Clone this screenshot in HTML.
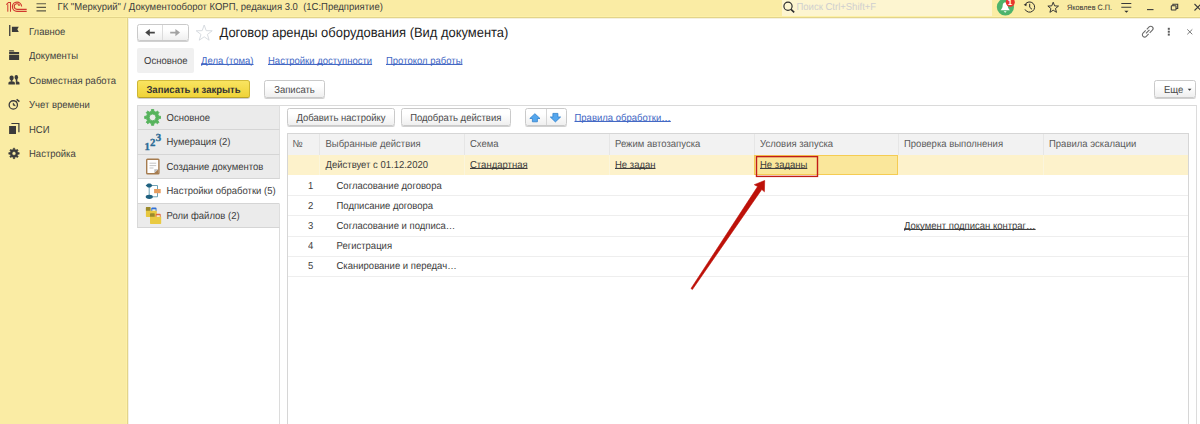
<!DOCTYPE html>
<html lang="ru">
<head>
<meta charset="utf-8">
<title>Договор аренды оборудования (Вид документа)</title>
<style>
*{box-sizing:border-box;margin:0;padding:0}
html,body{width:1200px;height:424px;overflow:hidden;background:#fff}
body{text-rendering:geometricPrecision;font-family:"Liberation Sans",sans-serif;font-size:9.5px;color:#3c3c3c;position:relative}
.abs{position:absolute}
.t{position:absolute;white-space:nowrap;line-height:12px;font-size:9.5px;transform:scaleY(1.07);transform-origin:50% 77.5%}
.bt{display:inline-block;position:relative;top:1.7px;transform:scaleY(1.07);transform-origin:50% 77.5%}
#topbar{left:0;top:0;width:1200px;height:16px;background:#faeca4}
#topline{left:0;top:16px;width:1200px;height:3px;background:linear-gradient(#fdf1a7 0,#fdf1a7 1px,#e3d48a 1px,#e3d48a 2px,#f4f1e2 2px,#f4f1e2 3px)}
#side{left:0;top:18px;width:129px;height:406px;background:linear-gradient(90deg,#faeca4 0,#faeca4 126px,#fdf1a7 126px,#fdf1a7 127px,#e3d48a 127px,#e3d48a 128px,#f4f1e2 128px,#f4f1e2 129px)}
.nav{left:29px;color:#414141}
.hd{color:#5a5a5a}
.btn{position:absolute;border:1px solid #cacaca;border-radius:2.5px;background:linear-gradient(#ffffff 30%,#efefef);box-shadow:0 1px 0.5px rgba(0,0,0,.18);font-size:9.5px;color:#4a4a4a;text-align:center;white-space:nowrap;line-height:16px;height:18px}
.lnk{color:#4166c4;text-decoration:underline;text-decoration-skip-ink:none;text-underline-offset:0.2px;text-decoration-thickness:0.7px}
.ul{text-decoration:underline;text-decoration-skip-ink:none;text-underline-offset:0.2px;text-decoration-thickness:0.7px}
.ltab{position:absolute;left:137px;width:143px;background:#ebebeb;border-left:1px solid #d9d9d9;border-bottom:1px solid #d5d5d5;border-right:1px solid #dedede}
.ltab span{position:absolute;left:28.5px;font-size:9.5px;line-height:12px;white-space:nowrap;transform:scaleY(1.07);transform-origin:50% 77.5%}
.hl{position:absolute;height:1px;background:#eeeeee;left:288px;width:900px}
.vl{position:absolute;width:1px;background:#e6e6e6;top:134px;height:21px}
.vy{position:absolute;width:1px;background:#fbf5dc;top:155px;height:19.500px}
</style>
</head>
<body>
<!-- top bar -->
<div id="topbar" class="abs"></div>
<div id="topline" class="abs"></div>
<div class="abs" style="left:781.5px;top:0;width:210.5px;height:16px;background:#fdf5d0"></div>
<div class="t" style="left:57.500px;top:2.400px">ГК "Меркурий" / Документооборот КОРП, редакция 3.0&nbsp; (1С:Предприятие)</div>
<div class="t" style="left:796.500px;top:2.400px;color:#cfcfcf">Поиск Ctrl+Shift+F</div>
<div class="t" style="left:1067px;top:1.5px;font-size:7.3px;color:#333">Яковлев С.П.</div>

<!-- sidebar -->
<div id="side" class="abs"></div>
<div class="t nav" style="top:26.600px">Главное</div>
<div class="t nav" style="top:51.100px">Документы</div>
<div class="t nav" style="top:75.600px">Совместная работа</div>
<div class="t nav" style="top:100.100px">Учет времени</div>
<div class="t nav" style="top:124.600px">НСИ</div>
<div class="t nav" style="top:149.100px">Настройка</div>

<!-- header -->
<div class="btn" style="left:137px;top:24px;width:51.500px;height:17px"></div>
<div class="abs" style="left:162px;top:25px;width:1px;height:15px;background:#dcdcdc"></div>
<div class="t" style="left:219.500px;top:24px;font-size:12.95px;line-height:18px;color:#1c1c1c;transform:scaleY(1.05)">Договор аренды оборудования (Вид документа)</div>

<div class="abs" style="left:137px;top:48px;width:57px;height:24.500px;background:#f0f0f0;border-radius:2px"></div>
<div class="t" style="left:144px;top:55.850px">Основное</div>
<div class="t lnk" style="left:201px;top:55.850px">Дела (тома)</div>
<div class="t lnk" style="left:268px;top:55.850px">Настройки доступности</div>
<div class="t lnk" style="left:386px;top:55.850px">Протокол работы</div>

<div class="btn" style="left:137px;top:80px;width:113px;background:linear-gradient(#f9e460,#efd338);border-color:#d3bc3a #cdb634 #b9a32a #cdb634;font-weight:bold;color:#333"><span class="bt">Записать и закрыть</span></div>
<div class="btn" style="left:264px;top:80px;width:61px"><span class="bt">Записать</span></div>
<div class="btn" style="left:1154px;top:80px;width:41.500px;text-align:left;padding-left:9px"><span class="bt">Еще</span></div>

<!-- panel frame + left tabs -->
<div class="abs" style="left:137px;top:105px;width:1060px;height:1px;background:#dadada"></div>
<div class="abs" style="left:279px;top:105px;width:1px;height:319px;background:#dcdcdc"></div>
<div class="abs" style="left:1196px;top:105px;width:1px;height:319px;background:#dcdcdc"></div>
<div class="ltab" style="top:106px;height:23.500px"><span style="top:6.850px">Основное</span></div>
<div class="ltab" style="top:129.500px;height:25px"><span style="top:7.800px">Нумерация (2)</span></div>
<div class="ltab" style="top:154.500px;height:24.500px"><span style="top:7.400px">Создание документов</span></div>
<div class="ltab" style="top:179px;height:24.500px;background:#fff;border-right-color:#fff"><span style="top:7.400px">Настройки обработки (5)</span></div>
<div class="ltab" style="top:203.500px;height:24.500px"><span style="top:7.800px">Роли файлов (2)</span></div>

<!-- toolbar -->
<div class="btn" style="left:287px;top:108px;width:108px"><span class="bt">Добавить настройку</span></div>
<div class="btn" style="left:401px;top:108px;width:109.500px"><span class="bt">Подобрать действия</span></div>
<div class="btn" style="left:524.500px;top:108px;width:42.500px"></div>
<div class="abs" style="left:545.500px;top:109px;width:1px;height:16px;background:#d6d6d6"></div>
<div class="t lnk" style="left:574.500px;top:112.600px">Правила обработки…</div>

<!-- table -->
<div class="abs" style="left:287px;top:133px;width:902px;height:292px;border:1px solid #d6d6d6"></div>
<div class="abs" style="left:288px;top:134px;width:900px;height:21px;background:#f2f2f2"></div>
<div class="abs" style="left:288px;top:155px;width:900px;height:19.500px;background:#fdf2cb"></div>
<div class="vl" style="left:319px"></div><div class="vl" style="left:464px"></div><div class="vl" style="left:609px"></div><div class="vl" style="left:753.500px"></div><div class="vl" style="left:898px"></div><div class="vl" style="left:1043px"></div>
<div class="vy" style="left:319px"></div><div class="vy" style="left:464px"></div><div class="vy" style="left:609px"></div><div class="vy" style="left:1043px"></div>
<div class="abs" style="left:754px;top:155px;width:144px;height:19.500px;background:#fae79b;border:1px solid #f5cc52"></div>
<div class="t hd" style="left:292.500px;top:138.600px">№</div>
<div class="t hd" style="left:325.500px;top:138.600px">Выбранные действия</div>
<div class="t hd" style="left:470px;top:138.600px">Схема</div>
<div class="t hd" style="left:615px;top:138.600px">Режим автозапуска</div>
<div class="t hd" style="left:760px;top:138.600px">Условия запуска</div>
<div class="t hd" style="left:904px;top:138.600px">Проверка выполнения</div>
<div class="t hd" style="left:1049px;top:138.600px">Правила эскалации</div>

<div class="t" style="left:325.500px;top:159.700px">Действует с 01.12.2020</div>
<div class="t ul" style="left:470px;top:159.700px">Стандартная</div>
<div class="t ul" style="left:615px;top:159.700px">Не задан</div>
<div class="t ul" style="left:760px;top:159.700px">Не заданы</div>

<div class="t" style="left:308px;top:180.800px">1</div><div class="t" style="left:336.500px;top:180.800px">Согласование договора</div>
<div class="t" style="left:308px;top:201.000px">2</div><div class="t" style="left:336.500px;top:201.000px">Подписание договора</div>
<div class="t" style="left:308px;top:221.100px">3</div><div class="t" style="left:336.500px;top:221.100px">Согласование и подписа…</div>
<div class="t ul" style="left:904px;top:221.100px">Документ подписан контраг…</div>
<div class="t" style="left:308px;top:241.300px">4</div><div class="t" style="left:336.500px;top:241.300px">Регистрация</div>
<div class="t" style="left:308px;top:261.400px">5</div><div class="t" style="left:336.500px;top:261.400px">Сканирование и передач…</div>

<div class="hl" style="top:195px"></div>
<div class="hl" style="top:215px"></div>
<div class="hl" style="top:235.500px"></div>
<div class="hl" style="top:256px"></div>
<div class="hl" style="top:276px"></div>

<!-- icons + annotation -->
<svg class="abs" style="left:0;top:0" width="1200" height="424" viewBox="0 0 1200 424">
<!--ICONS-START-->
<!-- 1C logo -->
<g fill="none" stroke="#d0382e" stroke-width="1.150">
  <path d="M6.300 4.700 L8.500 2.450 L10.500 2.450 L10.500 11.700" stroke-width="1.050"/>
  <path d="M7.800 4.300 L7.800 11.700" stroke-width="1"/>
  <path d="M21.600 6.500 A4.600 4.600 0 1 0 17 11.300 L26.700 11.300"/>
  <path d="M19.700 5.700 A2.800 2.800 0 1 0 17 9.350 L26.700 9.350"/>
  <path d="M18.300 5.700 L19.100 4.900" stroke-width="0.900"/>
</g>
<!-- hamburger -->
<g stroke="#5d5946" stroke-width="1.1"><path d="M36.500 3.800H46M36.500 7.400H46M36.500 10.900H46"/></g>
<!-- search -->
<g fill="none" stroke="#2e2e2e" stroke-width="1.2"><circle cx="788" cy="6.300" r="4.100"/><path d="M791 9.400L794.200 12.300" stroke-width="1.600"/></g>
<!-- bell -->
<circle cx="1005.400" cy="7" r="8.600" fill="#4db36b"/>
<path d="M1005.200 2.300 C1003.300 2.600 1002.700 4.300 1002.600 6.300 C1002.500 8.200 1001.400 9.200 1000.500 10.300 L1009.900 10.300 C1009 9.200 1007.900 8.200 1007.800 6.300 C1007.700 4.300 1007.100 2.600 1005.200 2.300Z" fill="#fff"/>
<path d="M1003.700 11.300 L1006.700 11.300 L1005.200 12.700Z" fill="#fff"/>
<circle cx="1010.300" cy="2.200" r="4.500" fill="#e8352d"/>
<text x="1010.100" y="4.500" font-family="Liberation Sans, sans-serif" font-weight="bold" font-size="8" fill="#fff" text-anchor="middle">1</text>
<!-- history -->
<g fill="none" stroke="#2e2e2e" stroke-width="1"><path d="M1025.300 4.200 A5.100 5.100 0 1 1 1025 9.400"/><path d="M1029.700 3.800 V7.300 L1032 9.300"/></g>
<path d="M1023.600 4.800 L1026.800 3.200 L1026.300 6.300Z" fill="#2e2e2e"/>
<!-- star -->
<path d="M1053.20 2.20 L1054.61 5.86 L1058.53 6.07 L1055.48 8.54 L1056.49 12.33 L1053.20 10.20 L1049.91 12.33 L1050.92 8.54 L1047.87 6.07 L1051.79 5.860Z" fill="none" stroke="#2e2e2e" stroke-width="0.950" stroke-linejoin="round"/>
<!-- menu -->
<g stroke="#3a3a3a" stroke-width="1.100"><path d="M1121.300 3.500H1131.300M1121.300 7.200H1131.300"/></g>
<path d="M1124.300 10.700 L1128.500 10.700 L1126.400 12.700Z" fill="#2e2e2e"/>
<!-- window controls -->
<g fill="none" stroke="#3a3a3a" stroke-width="1.100">
<path d="M1147 9.600H1153.500"/>
<rect x="1171.300" y="5.800" width="4.700" height="4.200" rx="0.500"/><path d="M1172.900 5.800V4.300H1177.700V8.500H1176"/>
<path d="M1194.500 4L1201 10.500M1194.500 10.500L1201 4"/>
</g>
<!-- sidebar icons -->
<g fill="#3b3b3b">
<rect x="9.100" y="25" width="1.300" height="11"/>
<path d="M11.900 26.700 H18.800 L17.300 29.300 L18.800 31.900 H11.900Z"/>
<path d="M9.100 50.300 H13.600 L14.400 51.600 H9.100Z"/><rect x="9.100" y="52" width="10" height="2"/><rect x="9.100" y="54.700" width="10" height="5.300"/>
<ellipse cx="16.300" cy="77.300" rx="1.800" ry="2.400"/><rect x="15.800" y="79" width="1.500" height="2.800"/><path d="M15.800 84.500 V81.500 H17.900 Q19.500 81.500 19.500 83.100 V84.500Z"/>
<ellipse cx="11.600" cy="78" rx="2.700" ry="2.900" fill="#faeca4"/>
<ellipse cx="11.600" cy="78" rx="2.150" ry="2.400"/><rect x="10.800" y="80" width="1.600" height="1.800"/><path d="M8.400 84.500 V83 Q8.400 81.500 10 81.500 H13.300 Q14.900 81.500 14.900 83 V84.500Z"/>
<rect x="9.100" y="126" width="6.900" height="8"/>
<path d="M17.92 152.62 L19.24 152.62 L19.24 154.18 L17.92 154.18 L17.33 155.62 L18.26 156.56 L17.16 157.66 L16.22 156.73 L14.78 157.32 L14.78 158.64 L13.22 158.64 L13.22 157.32 L11.78 156.73 L10.84 157.66 L9.74 156.56 L10.67 155.62 L10.08 154.18 L8.76 154.18 L8.76 152.62 L10.08 152.62 L10.67 151.18 L9.74 150.24 L10.84 149.14 L11.78 150.07 L13.22 149.48 L13.22 148.16 L14.78 148.16 L14.78 149.48 L16.22 150.07 L17.16 149.14 L18.26 150.24 L17.33 151.18Z M15.90 153.40 A1.9 1.9 0 1 0 12.10 153.40 A1.9 1.9 0 1 0 15.90 153.40Z" fill-rule="evenodd" stroke="#3b3b3b" stroke-width="0.5" stroke-linejoin="round"/>
</g>
<g fill="none" stroke="#3b3b3b">
<circle cx="13.300" cy="104.900" r="4.150" stroke-width="1.300"/>
<path d="M13.200 102.900 V105.200 L15.300 105.900Z" stroke-width="0.600" fill="#3b3b3b"/>
<path d="M16.600 99.300 L19.400 101.600" stroke-width="1.500"/><path d="M16.300 101.700 L17.500 100.600" stroke-width="1"/>
<path d="M11.400 123.500 H18.900 V132.200" stroke-width="1.200"/>
</g>
<!-- nav arrows -->
<path d="M145.200 32.600 L149.800 28.900 V31.700 H154.800 V33.500 H149.800 V36.300Z" fill="#444"/>
<path d="M180 32.600 L175.400 28.900 V31.800 H170.200 V33.400 H175.400 V36.300Z" fill="#a2a2a2"/>
<path d="M204.20 25.00 L206.20 30.65 L212.19 30.80 L207.43 34.45 L209.14 40.20 L204.20 36.80 L199.26 40.20 L200.97 34.45 L196.21 30.80 L202.20 30.650Z" fill="#fff" stroke="#d3d7dd" stroke-width="0.900" stroke-linejoin="round"/>
<!-- link / dots / close -->
<g fill="none" stroke="#6a6a6a" stroke-width="1.100" transform="rotate(-45 1147.700 31.600)">
<path d="M1148.700 29.300 H1152 A2.300 2.300 0 0 1 1152 33.900 H1148.200"/>
<path d="M1146.700 33.900 H1143.400 A2.300 2.300 0 0 1 1143.400 29.300 H1147.200"/>
<path d="M1145.200 31.600 H1150.200"/>
</g>
<g fill="#5a5a5a"><rect x="1167.800" y="27.800" width="2" height="2"/><rect x="1167.800" y="30.700" width="2" height="2"/><rect x="1167.800" y="33.600" width="2" height="2"/></g>
<path d="M1187.300 29.400 L1192.300 34.300 M1187.300 34.300 L1192.300 29.400" stroke="#6a6a6a" stroke-width="0.900" fill="none"/>
<!-- Еще caret -->
<path d="M1187.700 88.800 H1191.500 L1189.600 90.800Z" fill="#3a3a3a"/>
<!-- left tab icons -->
<path d="M158.68 116.19 L160.51 116.23 L160.51 118.57 L158.68 118.61 L157.76 120.84 L159.03 122.17 L157.37 123.83 L156.04 122.56 L153.81 123.48 L153.77 125.31 L151.43 125.31 L151.39 123.48 L149.16 122.56 L147.83 123.83 L146.17 122.17 L147.44 120.84 L146.52 118.61 L144.69 118.57 L144.69 116.23 L146.52 116.19 L147.44 113.96 L146.17 112.63 L147.83 110.97 L149.16 112.24 L151.39 111.32 L151.43 109.49 L153.77 109.49 L153.81 111.32 L156.04 112.24 L157.37 110.97 L159.03 112.63 L157.76 113.96Z M156.00 117.40 A3.4 3.4 0 1 0 149.20 117.40 A3.4 3.4 0 1 0 156.00 117.40Z" fill="#56b35c" fill-rule="evenodd" stroke="#56b35c" stroke-width="0.9" stroke-linejoin="round"/>
<g font-family="Liberation Serif, serif" font-weight="bold" font-size="10.800" fill="#2b6b96" stroke="#2b6b96" stroke-width="0.35">
<text x="144.600" y="149.700">1</text><text x="149.900" y="145.500">2</text><text x="155.700" y="141.200">3</text>
</g>
<!-- doc icon -->
<rect x="146.700" y="159.200" width="12.200" height="14.600" rx="0.800" fill="#fff" stroke="#a67c4f" stroke-width="1.400"/>
<g stroke="#bdbdbd" stroke-width="0.900"><path d="M149.500 163.200H156.200M149.500 165.600H156.200M149.500 168H153.500"/></g>
<path d="M154.300 173.100 L158.200 169.200 V173.100Z" fill="#a67c4f"/>
<path d="M154.300 169.200 H158.200 L154.300 173.100Z" fill="#bcbcbc"/>
<!-- flow icon -->
<g fill="none" stroke="#6098ad" stroke-width="0.900">
<path d="M149.200 187 V195"/><path d="M152.500 185.500 H157.500 V189"/><path d="M157.500 193 V196.800 H152.500"/>
</g>
<path d="M145.600 185.500 L148 183.450 H150.400 L152.800 185.500 L150.400 187.550 H148Z" fill="#1f6180"/>
<ellipse cx="149.300" cy="196.800" rx="3.600" ry="2.150" fill="#1f6180"/>
<rect x="154.100" y="189" width="6.600" height="4.200" fill="#e79d5f"/>
<!-- folders icon -->
<path d="M151.300 211.200 V208.600 Q151.300 207.600 152.300 207.600 H155.500 Q156.500 207.600 156.500 208.600 V211.200Z" fill="#2f6fd6"/>
<rect x="152.300" y="209.300" width="3.300" height="1.900" fill="#f6f2d8"/>
<path d="M145.900 216.300 V207.800 Q145.900 207.100 146.600 207.100 H149.900 Q150.500 207.100 150.500 207.800 V210.800 H156.800 V216.300 Q156.800 217 156.100 217 H146.600 Q145.900 217 145.900 216.300Z" fill="#e7c73f"/>
<path d="M145.900 210.800 V207.800 Q145.900 207.100 146.600 207.100 H149.900 Q150.500 207.100 150.500 207.800 V210.800Z" fill="#9a892b"/>
<path d="M155.700 217 V214.700 Q155.700 213.800 156.600 213.800 H159.800 Q160.700 213.800 160.700 214.700 V217Z" fill="#e0693c"/>
<rect x="156.600" y="215.300" width="3.200" height="1.700" fill="#fbf3e6"/>
<path d="M150 223.300 V214 Q150 213.300 150.700 213.300 H154.100 Q154.700 213.300 154.700 214 V216.700 H161.200 V223.300 Q161.200 224 160.500 224 H150.700 Q150 224 150 223.300Z" fill="#e9ca42"/>
<path d="M150 216.700 V214 Q150 213.300 150.700 213.300 H154.100 Q154.700 213.300 154.700 214 V216.700Z" fill="#9a892b"/>
<!-- toolbar arrows -->
<path d="M534.900 113.700 L540 118.500 H537.400 V121.800 H532.400 V118.500 H529.800Z" fill="#55a7ee" stroke="#2f80cc" stroke-width="0.800" stroke-linejoin="round"/>
<path d="M555.400 121.900 L560.600 117 H557.900 V113.400 H552.900 V117 H550.300Z" fill="#55a7ee" stroke="#2f80cc" stroke-width="0.800" stroke-linejoin="round"/>
<!-- annotation -->
<rect x="756.500" y="156.600" width="61" height="19.800" fill="none" stroke="#c21d17" stroke-width="1.400"/>
<polygon points="691.000,288.500 757.600,186.600 754.300,184.700 764.700,180.500 764.400,191.800 761.800,189.400 692.400,289.500" fill="#bd1109" stroke="#bd1109" stroke-width="0.600" stroke-linejoin="round"/>
<!--ICONS-END-->
</svg>
</body>
</html>
